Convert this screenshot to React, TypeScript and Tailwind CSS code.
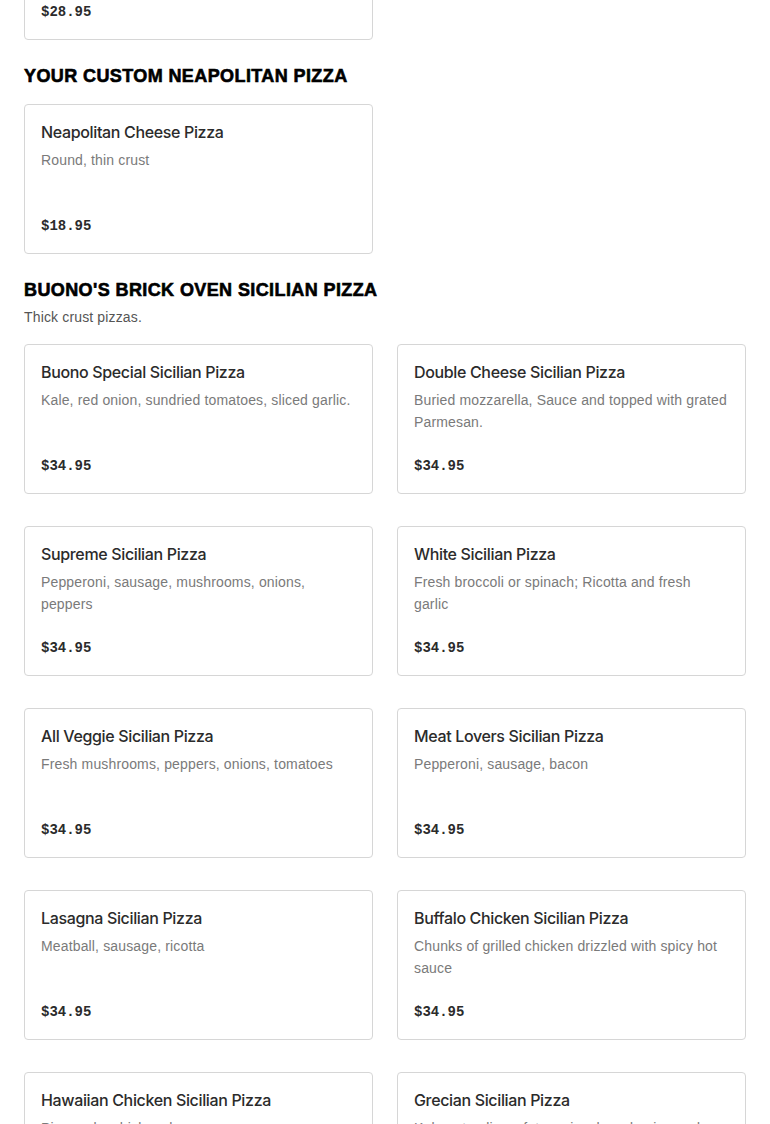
import React from 'react';

interface Item {
  name: string;
  desc: string;
  price: string;
}

const sicilian: Item[] = [
  { name: 'Buono Special Sicilian Pizza', desc: 'Kale, red onion, sundried tomatoes, sliced garlic.', price: '$34.95' },
  { name: 'Double Cheese Sicilian Pizza', desc: 'Buried mozzarella, Sauce and topped with grated Parmesan.', price: '$34.95' },
  { name: 'Supreme Sicilian Pizza', desc: 'Pepperoni, sausage, mushrooms, onions, peppers', price: '$34.95' },
  { name: 'White Sicilian Pizza', desc: 'Fresh broccoli or spinach; Ricotta and fresh\ngarlic', price: '$34.95' },
  { name: 'All Veggie Sicilian Pizza', desc: 'Fresh mushrooms, peppers, onions, tomatoes', price: '$34.95' },
  { name: 'Meat Lovers Sicilian Pizza', desc: 'Pepperoni, sausage, bacon', price: '$34.95' },
  { name: 'Lasagna Sicilian Pizza', desc: 'Meatball, sausage, ricotta', price: '$34.95' },
  { name: 'Buffalo Chicken Sicilian Pizza', desc: 'Chunks of grilled chicken drizzled with spicy hot sauce', price: '$34.95' },
  { name: 'Hawaiian Chicken Sicilian Pizza', desc: 'Pineapple, chicken, ham', price: '$34.95' },
  { name: 'Grecian Sicilian Pizza', desc: 'Kalamata olives, feta, spinach, red onion and tomatoes', price: '$34.95' },
];

const MenuCard = ({ item }: { item: Item }) => (
  <div className="h-[150px] bg-white border border-[#d6d6d6] rounded-[4px] px-4 pt-[15px] pb-[15px] flex flex-col justify-between">
    <div>
      <h3 className="text-[16px] leading-6 font-medium text-[#2b2b2b] font-['Inter',sans-serif] tracking-[-0.35px]">{item.name}</h3>
      <p className="mt-[5px] text-[14px] leading-[22px] text-[#7a7a7a] font-['Liberation_Sans',sans-serif] tracking-[0.15px] whitespace-pre-line">{item.desc}</p>
    </div>
    <p className="text-[14px] leading-6 font-bold text-[#2b2b2b] font-['Liberation_Mono',monospace]">{item.price}</p>
  </div>
);

const SectionTitle = ({ children }: { children: React.ReactNode }) => (
  <h2 className="text-[18px] leading-6 font-black uppercase text-black font-['Liberation_Sans',sans-serif] tracking-[0.4px] [-webkit-text-stroke:0.6px_black]">{children}</h2>
);

export default function App() {
  return (
    <div className="w-[770px] h-[1124px] overflow-hidden bg-white px-6">
      {/* previous section, scrolled mostly out of view */}
      <div className="grid grid-cols-2 gap-6 -mt-[110px]">
        <MenuCard item={{ name: 'Sicilian Cheese Pizza', desc: 'Square, thick crust', price: '$28.95' }} />
      </div>

      <section className="mt-6">
        <SectionTitle>Your Custom Neapolitan Pizza</SectionTitle>
        <div className="grid grid-cols-2 gap-6 mt-4">
          <MenuCard item={{ name: 'Neapolitan Cheese Pizza', desc: 'Round, thin crust', price: '$18.95' }} />
        </div>
      </section>

      <section className="mt-6">
        <SectionTitle>Buono's Brick Oven Sicilian Pizza</SectionTitle>
        <p className="mt-[4px] text-[14px] leading-[22px] text-[#555] font-['Liberation_Sans',sans-serif] tracking-[0.15px]">Thick crust pizzas.</p>
        <div className="grid grid-cols-2 gap-x-6 gap-y-8 mt-[16px]">
          {sicilian.map(item => (
            <MenuCard key={item.name} item={item} />
          ))}
        </div>
      </section>
    </div>
  );
}
